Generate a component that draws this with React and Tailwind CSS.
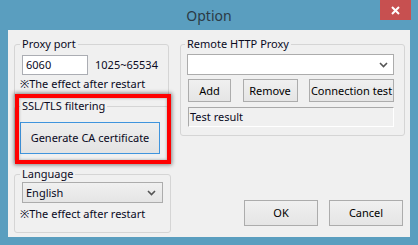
import React from "react";

const font = "font-['Noto_Sans',sans-serif]";

function Chevron() {
  return (
    <svg width="9" height="6" viewBox="0 0 9 6" className="shrink-0">
      <path d="M1 1 L4.5 4.5 L8 1" fill="none" stroke="#555" strokeWidth="1.6" />
    </svg>
  );
}

function Btn({ children, className = "" }) {
  return (
    <div
      className={`flex items-center justify-center border border-[#acacac] bg-gradient-to-b from-[#f0f0f0] to-[#e5e5e5] text-[11px] leading-[16px] text-black ${className}`}
    >
      {children}
    </div>
  );
}

export default function App() {
  return (
    <div className={`w-[418px] h-[245px] bg-[#5a9ebf] flex flex-col ${font}`}>
      <div className="h-[30px] grid grid-cols-[1fr_auto_1fr] items-start">
        <div />
        <div className="h-[30px] flex items-center text-[14px] text-[#2b3a45] pt-[1px]">Option</div>
        <div className="flex justify-end pr-[7px]">
          <div className="w-[31px] h-[20px] bg-[#c75050] flex items-center justify-center">
            <svg width="9" height="9" viewBox="0 0 9 9">
              <path d="M1 1 L8 8 M8 1 L1 8" stroke="#fff" strokeWidth="2" />
            </svg>
          </div>
        </div>
      </div>

      <div className="relative mx-[8px] h-[207px] bg-[#f0f0f0] flex text-[11px] leading-[16px] text-[#0a0a1e]">
        {/* left column */}
        <div className="ml-[6px] w-[155px] pt-[6px] flex flex-col">
          <fieldset className="h-[62px] border border-[#d5d5d5] rounded-[3px] px-[7px] m-0">
            <legend className="ml-[-2px] px-[2px]">Proxy port</legend>
            <div className="flex items-center mt-[3px]">
              <div className="w-[66px] h-[20px] bg-white border border-[#abadb3] flex items-center pl-[3px]">6060</div>
              <span className="ml-[7px]">1025~65534</span>
            </div>
            <div className="mt-[1px] ml-[-2px]">※The effect after restart</div>
          </fieldset>

          <fieldset className="h-[64px] border border-[#d5d5d5] rounded-[3px] px-[5px] m-0">
            <legend className="ml-0 px-[2px]">SSL/TLS filtering</legend>
            <div className="mt-[8px] w-[140px] h-[32px] border border-[#3f94dd] bg-gradient-to-b from-[#eeeeee] to-[#e3e3e3] flex items-center justify-center">
              Generate CA certificate
            </div>
          </fieldset>

          <fieldset className="mt-[4px] h-[67px] border border-[#d5d5d5] rounded-[3px] px-[7px] m-0">
            <legend className="ml-[-2px] px-[2px]">Language</legend>
            <div className="w-[141px] h-[21px] border border-[#acacac] bg-gradient-to-b from-[#f0f0f0] to-[#e5e5e5] flex items-center justify-between pl-[3px] pr-[6px]">
              <span>English</span>
              <Chevron />
            </div>
            <div className="mt-[3px] ml-[-2px]">※The effect after restart</div>
          </fieldset>
        </div>

        {/* right column */}
        <div className="ml-[11px] w-[225px] pt-[6px] flex flex-col">
          <fieldset className="h-[100px] border border-[#d5d5d5] rounded-[3px] pl-[6px] pr-[10px] m-0">
            <legend className="ml-[-2px] px-[2px]">Remote HTTP Proxy</legend>
            <div className="mt-[2px] w-[207px] h-[21px] bg-white border border-[#acacac] flex items-center justify-end pr-[5px]">
              <Chevron />
            </div>
            <div className="mt-[4px] pl-[1px] flex justify-between">
              <Btn className="w-[43px] h-[23px]">Add</Btn>
              <Btn className="w-[55px] h-[23px]">Remove</Btn>
              <Btn className="w-[85px] h-[23px] whitespace-nowrap">Connection test</Btn>
            </div>
            <div className="mt-[5px] ml-[1px] w-[206px] h-[20px] border border-t-[#a9a9a9] border-l-[#a9a9a9] border-b-white border-r-white flex items-center pl-[1px]">
              Test result
            </div>
          </fieldset>
          <div className="flex-1" />
          <div className="mb-[11px] pr-[2px] flex justify-end gap-[11px]">
            <Btn className="w-[74px] h-[26px]">OK</Btn>
            <Btn className="w-[74px] h-[26px]">Cancel</Btn>
          </div>
        </div>

        {/* red highlight frame */}
        <div className="absolute left-[7px] top-[64px] w-[156px] h-[70px] border-4 border-[#ff0000] shadow-[0_0_4px_1px_rgba(0,0,0,0.45),inset_0_0_3px_rgba(0,0,0,0.35)] pointer-events-none" />
      </div>
    </div>
  );
}
